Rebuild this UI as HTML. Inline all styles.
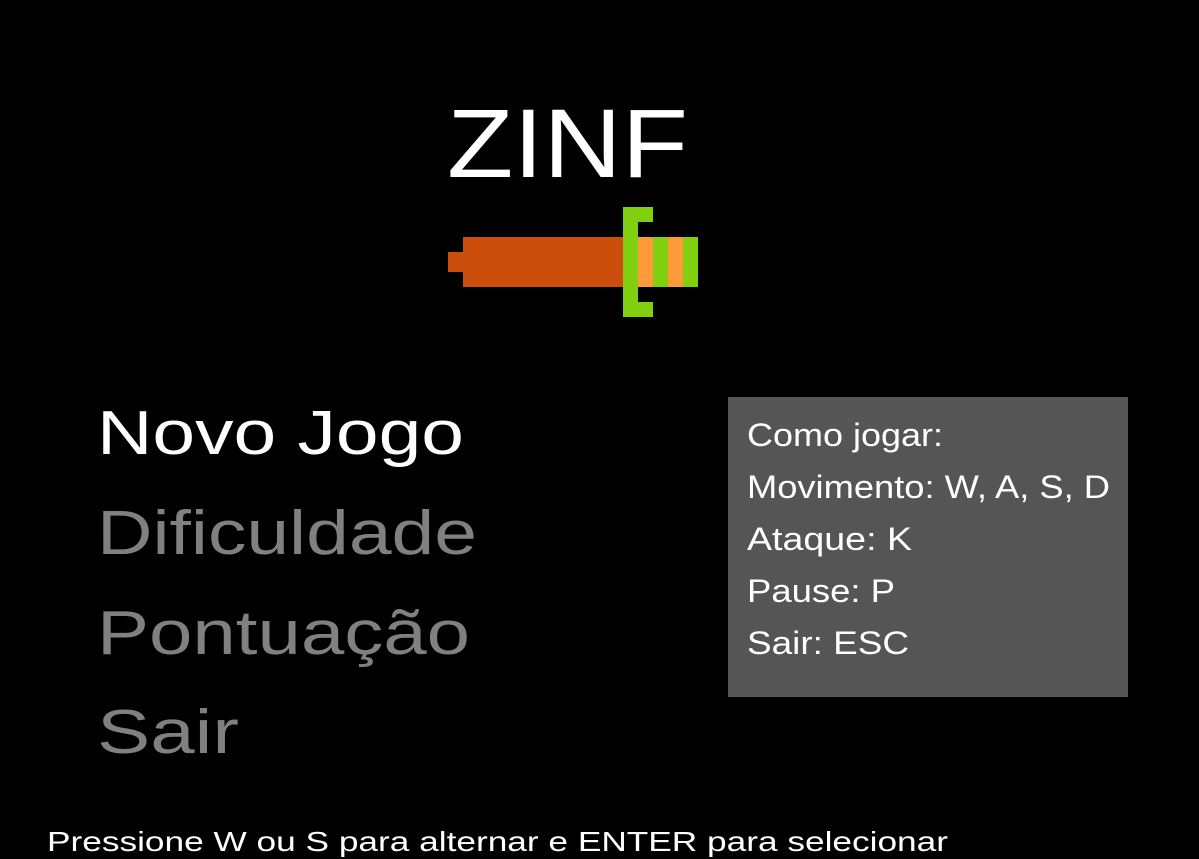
<!DOCTYPE html>
<html><head><meta charset="utf-8"><style>
html,body{margin:0;padding:0;background:#000;width:1199px;height:859px;overflow:hidden}
svg{display:block}
text{font-family:"Liberation Sans",sans-serif}
</style></head><body>
<svg width="1199" height="859" viewBox="0 0 1199 859" xmlns="http://www.w3.org/2000/svg">
<rect width="1199" height="859" fill="#000"/>
<text x="447" y="177" font-size="97" fill="#fff" textLength="241" lengthAdjust="spacingAndGlyphs">ZINF</text>
<rect x="448" y="252" width="16" height="20" fill="#CB4E0C"/>
<rect x="463" y="237" width="161" height="50" fill="#CB4E0C"/>
<rect x="623" y="207" width="15" height="110" fill="#80D010"/>
<rect x="623" y="207" width="30" height="15" fill="#80D010"/>
<rect x="623" y="302" width="30" height="15" fill="#80D010"/>
<rect x="638" y="237" width="15" height="50" fill="#FF9A3A"/>
<rect x="653" y="237" width="15" height="50" fill="#80D010"/>
<rect x="668" y="237" width="15" height="50" fill="#FF9A3A"/>
<rect x="683" y="237" width="15" height="50" fill="#80D010"/>
<g font-size="62">
<text x="97" y="454" fill="#fff" textLength="367" lengthAdjust="spacingAndGlyphs">Novo Jogo</text>
<text x="97" y="554" fill="#808080" textLength="380" lengthAdjust="spacingAndGlyphs">Dificuldade</text>
<text x="97" y="654" fill="#808080" textLength="373" lengthAdjust="spacingAndGlyphs">Pontuação</text>
<text x="97" y="753" fill="#808080" textLength="142" lengthAdjust="spacingAndGlyphs">Sair</text>
</g>
<rect x="728" y="397" width="400" height="300" fill="#555"/>
<g font-size="32" fill="#fff">
<text x="747" y="446" textLength="196" lengthAdjust="spacingAndGlyphs">Como jogar:</text>
<text x="747" y="498" textLength="363" lengthAdjust="spacingAndGlyphs">Movimento: W, A, S, D</text>
<text x="747" y="550" textLength="165" lengthAdjust="spacingAndGlyphs">Ataque: K</text>
<text x="747" y="602" textLength="148" lengthAdjust="spacingAndGlyphs">Pause: P</text>
<text x="747" y="654" textLength="162" lengthAdjust="spacingAndGlyphs">Sair: ESC</text>
</g>
<text x="47" y="851" font-size="28" fill="#fff" textLength="901" lengthAdjust="spacingAndGlyphs">Pressione W ou S para alternar e ENTER para selecionar</text>
</svg>
</body></html>
